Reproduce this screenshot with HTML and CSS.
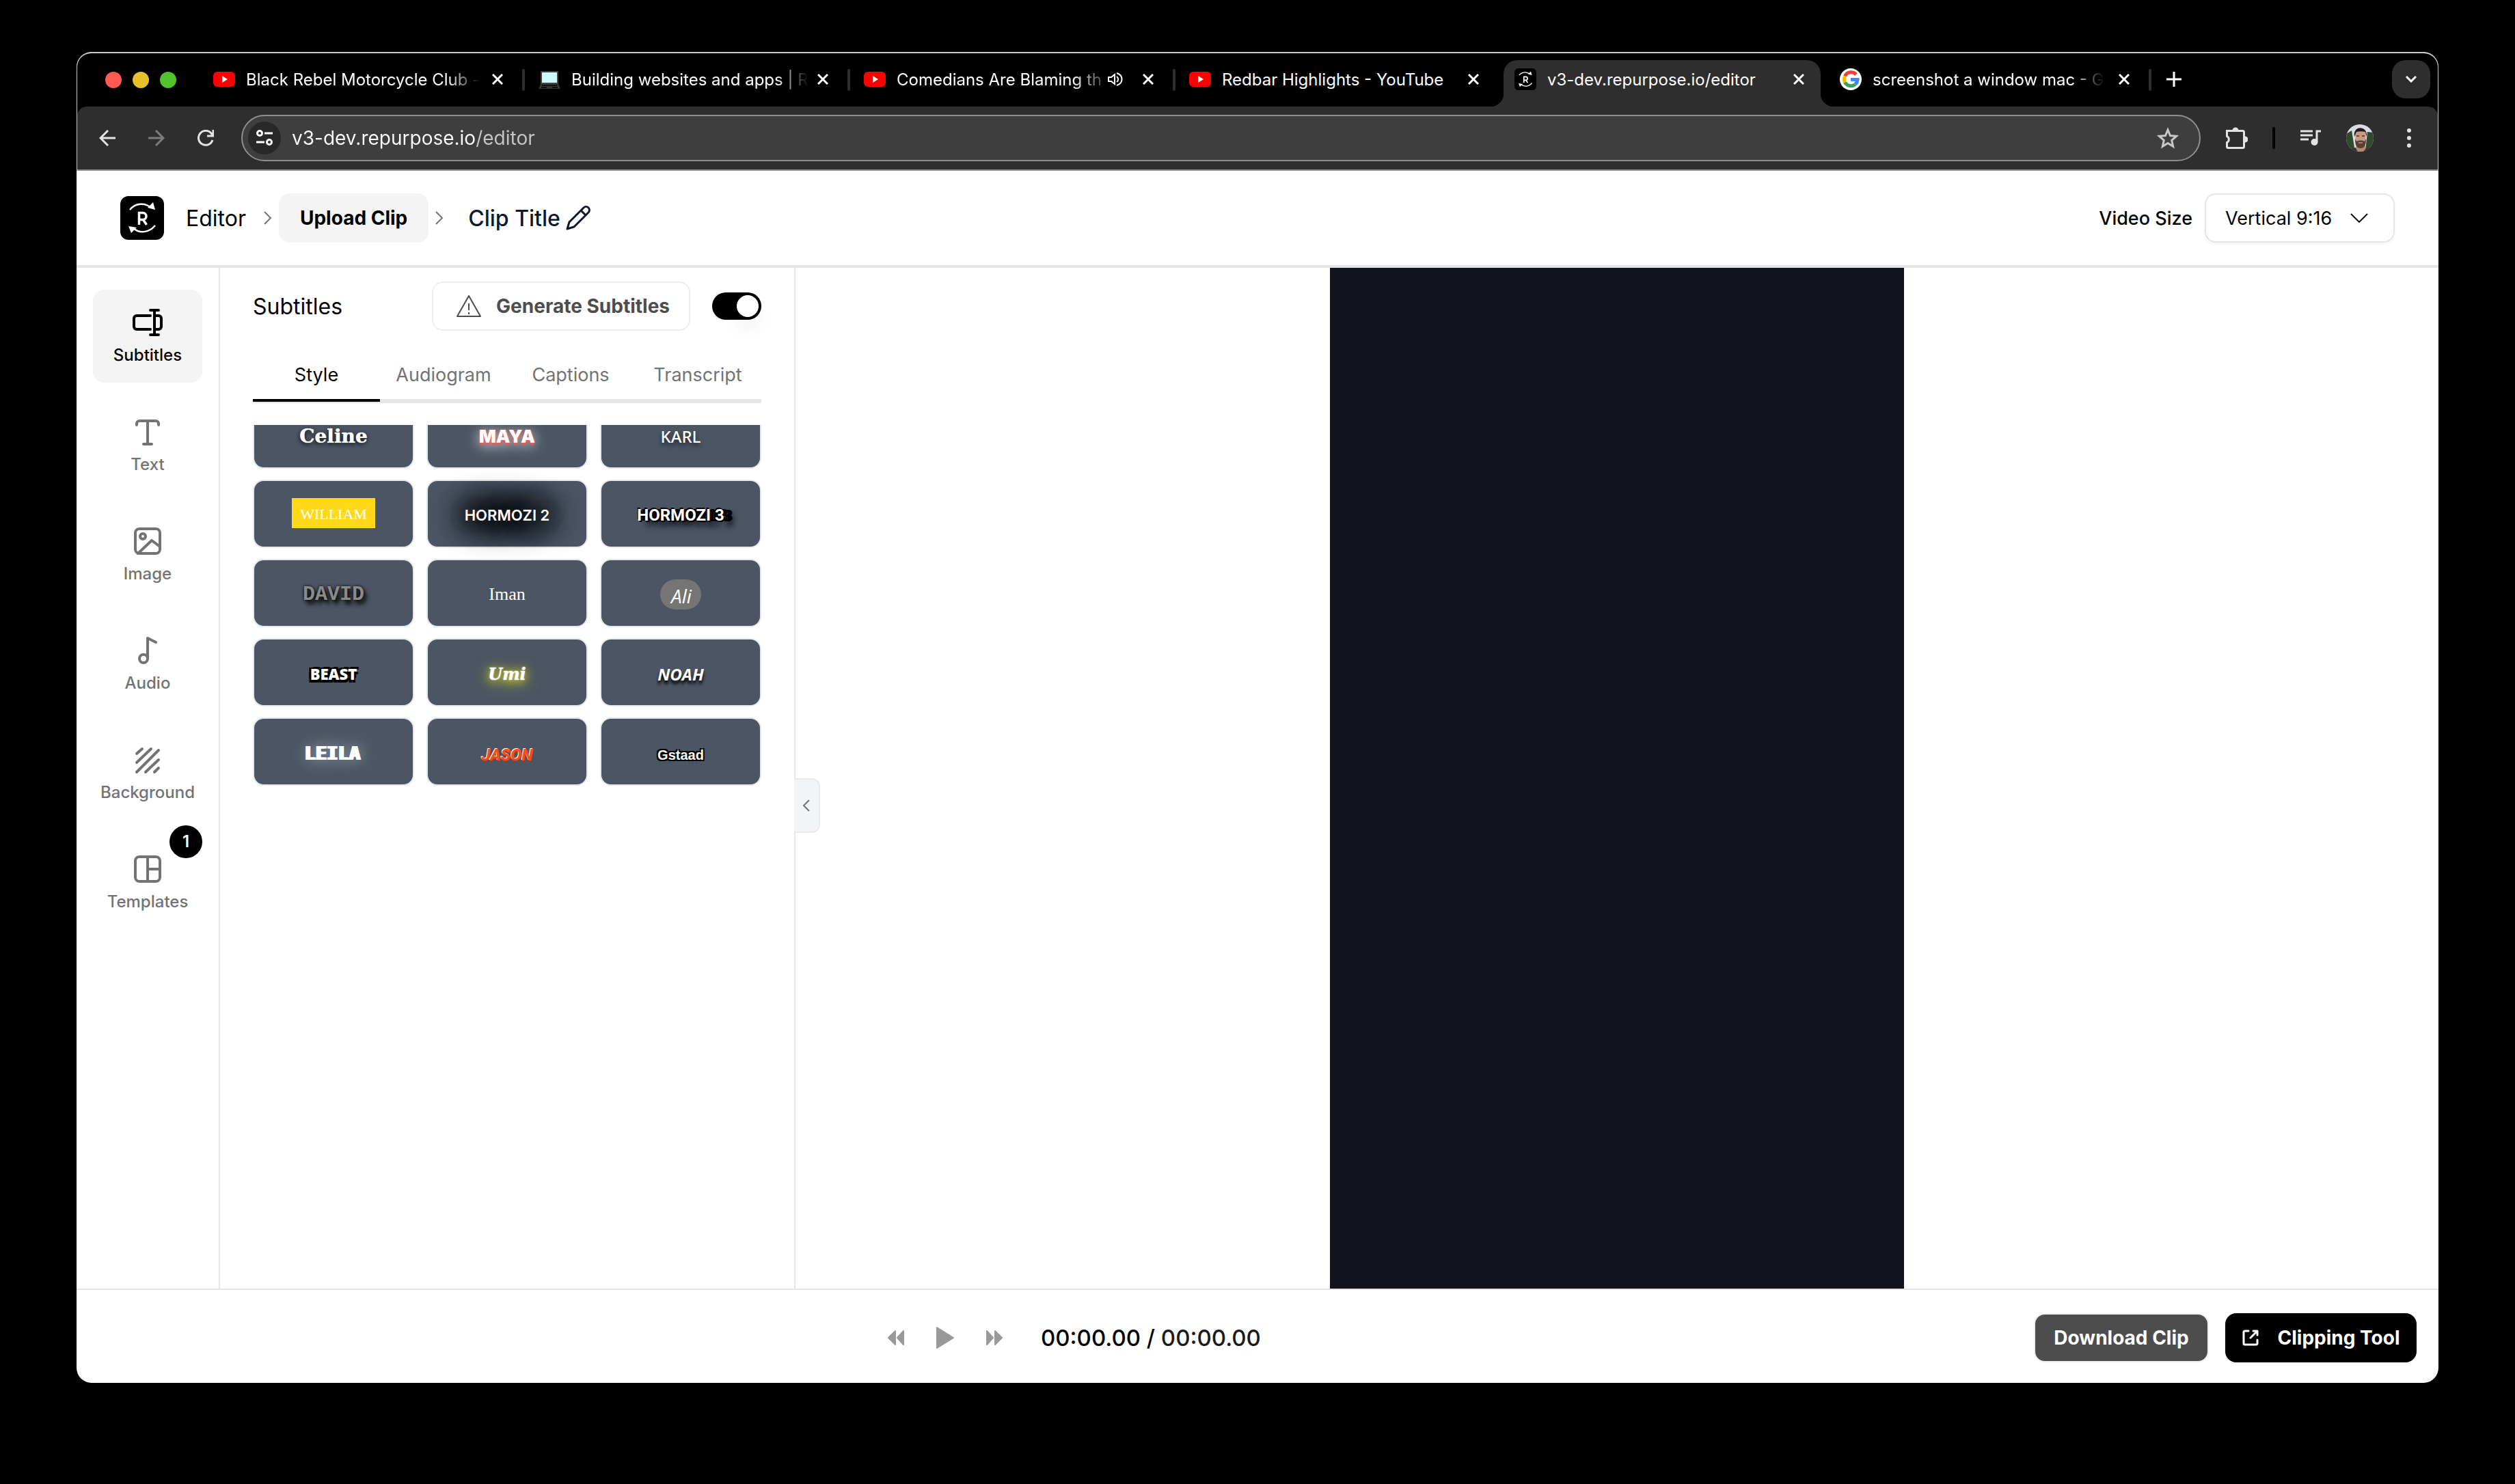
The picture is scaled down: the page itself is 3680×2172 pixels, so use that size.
FILE: index.html
```html
<!DOCTYPE html>
<html lang="en">
<head>
<meta charset="utf-8">
<title>Editor</title>
<link rel="stylesheet" href="styles.css">
</head>
<body>
<svg class="sprite" aria-hidden="true">
  <symbol id="yt" viewBox="0 0 32 22"><rect width="32" height="22" rx="6" fill="#f00"/><path d="M13 6v10l8-5z" fill="#fff"/></symbol>
  <symbol id="x" viewBox="0 0 16 16"><path d="M1 1l14 14M15 1L1 15" stroke="currentColor" stroke-width="3" fill="none"/></symbol>
  <symbol id="brand" viewBox="0 0 64 64"><rect width="64" height="64" rx="12"/><path d="M14 20C22 10 36 9 45 17M51 43C42 54 28 55 19 47" fill="none" stroke="#fff" stroke-width="2.500"/><path d="M51 20l-3-11-8 8zM12 44l4 10 8-8z" fill="#fff"/><path d="M27.500 42V24.500h5.500a5 5 0 0 1 0 10h-5.500m6 0l5 7.500" fill="none" stroke="#fff" stroke-width="3.500"/></symbol>
</svg>
<div class="window">
  <div class="chrome">
    <div class="tabstrip">
      <div class="lights"><i class="red"></i><i class="yellow"></i><i class="green"></i></div>
      <div class="tabs">
        <div class="tab"><svg class="fav"><use href="#yt"/></svg><button class="tab-title">Black Rebel Motorcycle Club -</button><button class="close" aria-label="Close tab"><svg><use href="#x"/></svg></button></div>
        <div class="tab"><svg class="fav" viewBox="0 0 32 32"><rect x="3" y="4" width="26" height="19" rx="1" fill="#444"/><rect x="5" y="6" width="22" height="15" fill="#cdf8ff"/><path d="M3 23h26l3 7H0z" fill="#333"/><path d="M5 25h22M4 28h8m8 0h8" stroke="#111" stroke-width="2"/></svg><button class="tab-title">Building websites and apps | R</button><button class="close" aria-label="Close tab"><svg><use href="#x"/></svg></button></div>
        <div class="tab audible"><svg class="fav"><use href="#yt"/></svg><button class="tab-title">Comedians Are Blaming th</button><button class="sound" aria-label="Mute tab"><svg viewBox="0 0 24 24" fill="none" stroke="currentColor" stroke-width="2"><path d="M2 9v6h4l5 4V5L6 9z"/><path d="M14 8c3 2 3 6 0 8M14 3c10 3 10 15 0 18"/></svg></button><button class="close" aria-label="Close tab"><svg><use href="#x"/></svg></button></div>
        <div class="tab whole"><svg class="fav"><use href="#yt"/></svg><button class="tab-title">Redbar Highlights - YouTube</button><button class="close" aria-label="Close tab"><svg><use href="#x"/></svg></button></div>
        <div class="tab whole active"><svg class="fav"><use href="#brand"/></svg><button class="tab-title">v3-dev.repurpose.io/editor</button><button class="close" aria-label="Close tab"><svg><use href="#x"/></svg></button></div>
        <div class="tab"><svg class="fav" viewBox="0 0 32 32"><circle cx="16" cy="16" r="16" fill="#fff"/><g fill="none" stroke-width="5"><path d="M24 9A10 10 0 0 0 7.500 11.500" stroke="#ea4335"/><path d="M7.500 11.500a10 10 0 0 0 0 9" stroke="#fbbc05"/><path d="M7.500 20.500A10 10 0 0 0 22.500 23.500" stroke="#34a853"/><path d="M22.500 23.500A10 10 0 0 0 26 16.500H16" stroke="#4285f4"/></g></svg><button class="tab-title">screenshot a window mac - G</button><button class="close" aria-label="Close tab"><svg><use href="#x"/></svg></button></div>
        <button class="new-tab" aria-label="New tab"><svg viewBox="0 0 22 22"><path d="M11 0v22M0 11h22" stroke="currentColor" stroke-width="3"/></svg></button>
      </div>
      <button class="tab-search" aria-label="Search tabs"><svg viewBox="0 0 16 10" fill="none" stroke="currentColor" stroke-width="3"><path d="M1 1l7 7 7-7"/></svg></button>
    </div>

    <div class="toolbar">
      <button class="nav" aria-label="Back"><svg viewBox="0 0 24 24"><path d="M24 12H2M13 1L2 12l11 11"/></svg></button>
      <button class="nav dim" aria-label="Forward"><svg viewBox="0 0 24 24"><path d="M0 12h22M11 1l11 11-11 11"/></svg></button>
      <button class="nav" aria-label="Reload"><svg viewBox="0 0 24 24"><path d="M22 15A10.500 10.500 0 1 1 20 5l3 4M23 0v9h-9"/></svg></button>
      <div class="omnibox">
        <button class="site" aria-label="Site information"><svg viewBox="0 0 24 24" fill="none" stroke="#fff" stroke-width="3"><circle cx="5" cy="5" r="3.500"/><path d="M12 5h12M0 18h12"/><circle cx="19" cy="18" r="3.500"/></svg></button>
        <input class="url" aria-label="Address" value="v3-dev.repurpose.io/editor">
        <button class="star" aria-label="Bookmark"><svg viewBox="0 0 32 32" fill="none" stroke="#c7c7c7" stroke-width="3"><path d="M16 4l3.500 8.500 9 .8-6.800 6 2 9L16 23.500 8.300 28.300l2-9-6.800-6 9-.8z"/></svg></button>
      </div>
      <div class="actions">
        <button aria-label="Extensions"><svg viewBox="0 0 32 32" fill="none" stroke="#e3e3e3" stroke-width="3"><path d="M1.500 5.500h23a2 2 0 0 1 2 2v21a2 2 0 0 1-2 2h-21a2 2 0 0 1-2-2v-6a5 5 0 0 0 0-9z"/><path d="M11 5a3 3 0 0 1 6 0M28 15a3 3 0 0 1 0 6" fill="#e3e3e3"/></svg></button>
        <span class="divider"></span>
        <button aria-label="Media controls"><svg viewBox="0 0 32 32" fill="none" stroke="#e3e3e3" stroke-width="3"><path d="M1 6h18M1 12h18M1 18h12M25 22V6h6"/><circle cx="21.500" cy="22" r="3.500" fill="#e3e3e3"/></svg></button>
        <button class="avatar" aria-label="Profile"><svg viewBox="0 0 40 40"><clipPath id="round"><circle cx="20" cy="20" r="20"/></clipPath><g clip-path="url(#round)"><rect width="40" height="40" fill="#dcdce6"/><path d="M0 14l8-5 5 31H0zM40 12l-9-1-3 29h12z" fill="#33482c"/><path d="M6 40c2-5 6-6 9-6h12c4 0 7 2 8 6z" fill="#353235"/><path d="M15 28h12l2 7-4 5h-8l-3-5z" fill="#b98871"/><path d="M13 13c0-7 16-7 16 0l-1 13c-2 8-12 8-14 0z" fill="#c79a84"/><path d="M13 21l2 4c3-2 9-2 12 0l2-4c0 7-1 14-8 14s-8-7-8-14z" fill="#5b4036"/><path d="M12 18C9 1 32 1 30 18l-2-7c-4-1-9-1-13 0z" fill="#221d1c"/><path d="M15 17h4M23 17h4" stroke="#45322c" stroke-width="1.500"/><path d="M18 27h6" stroke="#b5776c" stroke-width="2"/></g></svg></button>
        <button aria-label="Menu"><svg viewBox="0 0 32 32" fill="#e3e3e3"><circle cx="16" cy="5" r="3"/><circle cx="16" cy="16" r="3"/><circle cx="16" cy="27" r="3"/></svg></button>
      </div>
    </div>
  </div>

  <header class="header">
    <svg class="logo"><use href="#brand"/></svg>
    <a class="crumb" href="#">Editor</a>
    <svg class="sep" viewBox="0 0 12 20"><path d="M1 1l9 9-9 9"/></svg>
    <button class="upload">Upload Clip</button>
    <svg class="sep" viewBox="0 0 12 20"><path d="M1 1l9 9-9 9"/></svg>
    <button class="clip-title">Clip Title<svg viewBox="0 0 36 36" fill="none" stroke="currentColor" stroke-width="3" stroke-linejoin="round"><path d="M2 34l3-10L26 3a4.500 4.500 0 0 1 7 7L12 31zM22 7l7 7"/></svg></button>
    <label class="size-label" for="size">Video Size</label>
    <div class="select"><select id="size"><option>Vertical 9:16</option></select><svg viewBox="0 0 26 14"><path d="M1 1l12 12L25 1" fill="none" stroke="#111" stroke-width="2"/></svg></div>
  </header>

  <main class="main">
    <nav class="sidebar">
      <button class="item on"><svg viewBox="0 0 24 24"><path d="M14 17H4a2 2 0 0 1-2-2V9a2 2 0 0 1 2-2h10M17 7h3a2 2 0 0 1 2 2v6a2 2 0 0 1-2 2h-3M14 3h6M14 21h6M17 3v18"/></svg>Subtitles</button>
      <button class="item"><svg viewBox="0 0 24 24"><path d="M4 7V6a2 2 0 0 1 2-2h12a2 2 0 0 1 2 2v1M12 4v17M9 21h6"/></svg>Text</button>
      <button class="item"><svg viewBox="0 0 24 24"><rect x="3" y="3" width="18" height="18" rx="3"/><circle cx="8.500" cy="8.500" r="2"/><path d="M5 21L15 11.500 21 16"/></svg>Image</button>
      <button class="item"><svg viewBox="0 0 24 24"><circle cx="9" cy="18" r="3"/><path d="M12 18V3l6 3"/></svg>Audio</button>
      <button class="item"><svg viewBox="0 0 24 24"><path d="M4 7.500L8 4M4 14L14.500 4M4 21L20 5M10.500 21L20 12M17 21l3-3"/></svg>Background</button>
      <button class="item"><svg viewBox="0 0 24 24"><rect x="3" y="3" width="18" height="18" rx="3"/><path d="M12 3v18M12 12h9"/></svg>Templates<span class="badge">1</span></button>
    </nav>

    <section class="panel">
      <div class="panel-head">
        <h2>Subtitles</h2>
        <button class="generate"><svg viewBox="0 0 36 32" fill="none" stroke="currentColor" stroke-width="2" stroke-linejoin="round"><path d="M18 1L35 31H1zM18 12v10M18 25v3"/></svg>Generate Subtitles</button>
        <input class="toggle" type="checkbox" checked aria-label="Show subtitles">
      </div>
      <div class="subtabs">
        <button class="on">Style</button><button>Audiogram</button><button>Captions</button><button>Transcript</button>
      </div>
      <div class="scroll">
        <div class="cards">
          <button><span class="celine">Celine</span></button>
          <button><span class="maya">MAYA</span></button>
          <button><span class="karl">KARL</span></button>
          <button><span class="william">WILLIAM</span></button>
          <button><span class="hormozi2">HORMOZI 2</span></button>
          <button><span class="hormozi3">HORMOZI 3</span></button>
          <button><span class="david">DAVID</span></button>
          <button><span class="iman">Iman</span></button>
          <button><span class="ali">Ali</span></button>
          <button><span class="beast">BEAST</span></button>
          <button><span class="umi">Umi</span></button>
          <button><span class="noah">NOAH</span></button>
          <button><span class="leila">LEILA</span></button>
          <button class="low"><span class="jason">JASON</span></button>
          <button class="low"><span class="gstaad">Gstaad</span></button>
        </div>
      </div>
    </section>

    <section class="stage">
      <button class="collapse" aria-label="Collapse panel"><svg viewBox="0 0 10 18"><path d="M9 1L1 9l8 8" fill="none" stroke="#6b7280" stroke-width="2"/></svg></button>
      <div class="video"></div>
    </section>
  </main>

  <footer class="footer">
    <div class="player">
      <button class="skip" aria-label="Rewind"><svg viewBox="0 0 24 22"><path d="M11 1v20L1 11zM23 1v20l-9-10z"/></svg></button>
      <button class="play" aria-label="Play"><svg viewBox="0 0 28 34"><path d="M2 2v30l24-15z"/></svg></button>
      <button class="skip" aria-label="Fast forward"><svg viewBox="0 0 24 22"><path d="M1 1v20l9-10zM13 1v20l10-10z"/></svg></button>
      <div class="time">00:00.00 / <span>00:00.00</span></div>
    </div>
    <button class="download">Download Clip</button>
    <button class="clipping"><svg viewBox="0 0 24 24" fill="none" stroke="#fff" stroke-width="3" stroke-linecap="round" stroke-linejoin="round"><path d="M9 2H4a2 2 0 0 0-2 2v16a2 2 0 0 0 2 2h16a2 2 0 0 0 2-2v-5M16 2h6v6M22 2L12 12"/></svg>Clipping Tool</button>
  </footer>
</div>
</body>
</html>
```

FILE: styles.css
```css
* { box-sizing: border-box; }
body { margin: 0; height: 100vh; padding: 76px 112px 148px; background: #000; color: #000; font-family: Inter, "Liberation Sans", sans-serif; font-size: 28px; display: flex; }
button, input, select { font: inherit; color: inherit; background: none; border: 0; padding: 0; margin: 0; }
button { display: flex; align-items: center; justify-content: center; white-space: nowrap; }
a { color: inherit; text-decoration: none; }
svg { display: block; flex: none; }
.sprite { position: absolute; width: 0; height: 0; }

.window { flex: 1; min-width: 0; display: flex; flex-direction: column; background: #fff; border-radius: 22px; overflow: hidden; }
.chrome { background: #000; border: 2px solid #c9c7c7; border-width: 2px 1px 0; border-radius: 22px 22px 0 0; }

/* Browser tab strip */
.tabstrip { height: 78px; display: flex; align-items: flex-end; color: #fff; font-size: 24px; padding-right: 11px; }
.lights { display: flex; gap: 16px; padding: 0 38px 27px 41px; }
.lights i { width: 24px; height: 24px; border-radius: 50%; }
.red { background: #ff5b52; }
.yellow { background: #e6c02a; }
.green { background: #53c22b; }
.tabs { flex: 1; min-width: 0; display: flex; gap: 12px; }
.tab { position: relative; flex: 0 1 464px; min-width: 0; height: 68px; display: flex; align-items: center; padding: 0 24px 12px 16px; }
.tab::after { content: ""; position: absolute; right: -8px; top: 13px; width: 4px; height: 32px; border-radius: 2px; background: #2e2e2e; }
.tab:has(+ .active)::after, .tab.active::after { display: none; }
.active { background: #2e2e2e; border-radius: 20px 20px 0 0; }
.active::before { content: ""; position: absolute; left: -20px; right: -20px; bottom: 0; height: 20px; background: radial-gradient(circle at 0 0, transparent 20px, #2e2e2e 21px) left / 20px 20px no-repeat, radial-gradient(circle at 100% 0, transparent 20px, #2e2e2e 21px) right / 20px 20px no-repeat; }
.fav { width: 32px; height: 32px; margin-right: 16px; }
.tab-title { margin-right: auto; mask-image: linear-gradient(90deg, #000 calc(100% - 48px), transparent); }
.audible .tab-title { mask-image: linear-gradient(90deg, #000 calc(100% - 44px), #0004); }
.whole .tab-title { mask-image: none; }
.sound { margin-right: 28px; }
.sound svg { width: 24px; height: 24px; }
.close svg { width: 16px; height: 16px; }
.new-tab { padding: 0 18px 12px; }
.new-tab svg { width: 22px; height: 22px; }
.tab-search { width: 56px; height: 56px; border-radius: 20px; background: #2e2e2e; margin-bottom: 12px; }
.tab-search svg { width: 16px; height: 10px; }

/* Browser toolbar */
.toolbar { height: 94px; display: flex; align-items: center; background: #2e2e2e; border-bottom: 2px solid #8f8f8f; border-radius: 14px 14px 0 0; padding: 0 26px 0 32px; }
.nav { width: 24px; height: 24px; margin-right: 48px; color: #e3e3e3; }
.nav svg { width: 24px; height: 24px; fill: none; stroke: currentColor; stroke-width: 3; }
.nav.dim { color: #7c7c7c; }
.nav + .omnibox { margin-left: -8px; }
.omnibox { flex: 1; height: 68px; display: flex; align-items: center; background: #3e3e3e; border: 2px solid #8f8f8f; border-radius: 34px; padding: 0 30px 0 8px; }
.site { width: 48px; height: 48px; border-radius: 50%; background: #282828; margin-right: 16px; }
.site svg { width: 24px; height: 24px; }
.url { flex: 1; height: 40px; outline: 0; background: linear-gradient(90deg, #fff 268px, #c7c7c7 268px); background-clip: text; color: transparent; }
.star svg, .actions svg { width: 32px; height: 32px; }
.actions { display: flex; align-items: center; margin-left: 37px; gap: 36px; }
.divider { width: 4px; height: 32px; border-radius: 2px; background: #000; }
.actions .avatar svg { width: 40px; height: 40px; }

/* App header */
.header { height: 142px; display: flex; align-items: center; border-bottom: 4px solid #e5e5e5; padding: 0 64px; font-weight: 500; }
.logo { width: 64px; height: 64px; margin-right: 32px; }
.crumb { font-size: 32px; font-weight: 400; }
.sep { width: 12px; height: 20px; margin: 0 10px; fill: none; stroke: #737373; stroke-width: 2; }
.crumb + .sep { margin-left: 26px; }
.upload { height: 72px; padding: 0 31px; border-radius: 16px; background: #f4f4f5; font-weight: 700; }
.clip-title { font-size: 32px; font-weight: 500; color: #0f172a; gap: 8px; margin-left: 26px; margin-right: auto; }
.clip-title svg { width: 36px; height: 36px; }
.size-label { margin-right: 18px; font-size: 27px; }
.select { display: flex; align-items: center; position: relative; }
.select select { appearance: none; width: 278px; height: 72px; padding: 0 28px; border: 2px solid #e5e5e5; border-radius: 16px; box-shadow: 0 2px 4px #0000000d; font-size: 27px; font-weight: 400; }
.select svg { position: absolute; right: 39px; width: 26px; height: 14px; pointer-events: none; }

/* Editor body */
.main { flex: 1; min-height: 0; display: flex; }
.sidebar { width: 210px; border-right: 2px solid #e5e5e5; padding: 32px 24px; display: flex; flex-direction: column; gap: 24px; }
.item { position: relative; height: 136px; flex-direction: column; gap: 8px; border-radius: 16px; font-size: 24px; font-weight: 500; line-height: 32px; color: #737373; }
.item svg { width: 48px; height: 48px; fill: none; stroke: currentColor; stroke-width: 2; stroke-linecap: round; stroke-linejoin: round; }
.item.on { background: #f4f4f5; color: #000; }
.badge { position: absolute; top: -16px; right: 0; width: 48px; height: 48px; border-radius: 50%; background: #000; color: #fff; text-align: center; line-height: 48px; font-weight: 600; }

.panel { width: 842px; border-right: 2px solid #e5e7eb; padding: 20px 48px 0; display: flex; flex-direction: column; }
.panel-head { height: 72px; display: flex; align-items: center; }
.panel-head h2 { flex: 1; margin: 0; font-size: 32px; font-weight: 400; }
.generate { height: 72px; padding: 0 28px 0 34px; gap: 22px; border: 2px solid #ededf1; border-radius: 16px; color: #4d4d4d; font-weight: 700; }
.generate svg { width: 36px; height: 32px; }
.toggle { appearance: none; width: 72px; height: 40px; padding: 4px; margin-left: 32px; border-radius: 20px; background: #000; }
.toggle::after { content: ""; display: block; width: 32px; height: 32px; margin-left: auto; border-radius: 50%; background: #fff; box-shadow: 0 20px 24px #0000000d; }
.subtabs { display: flex; margin-top: 28px; border-bottom: 6px solid #e5e6e8; font-size: 27px; }
.subtabs button { flex: 1; height: 76px; margin-bottom: -4px; border-bottom: 4px solid transparent; color: #737373; }
.subtabs .on { border-color: #000; color: #000; }
.scroll { flex: 1; min-height: 0; overflow: hidden; margin-top: 32px; }
.cards { display: grid; grid-template-columns: repeat(3, 1fr); gap: 16px 18px; margin-top: -36px; }
.cards button { height: 100px; border: 2px solid #e5e7eb; border-radius: 16px; background: #4b5563; color: #fff; font-size: 24px; padding-top: 4px; }
.cards .low { padding-top: 10px; }
.celine { font-family: "DejaVu Serif", serif; font-weight: 700; font-size: 28px; text-shadow: 0 0 1px #fff, 0 2px 6px #000; }
.maya { font-weight: 900; font-size: 26px; text-shadow: 0 0 3px #f65, 0 3px 2px #e55, 0 4px 20px #fff; }
.karl { font-family: "Noto Sans", sans-serif; font-weight: 500; font-size: 24px; text-shadow: 0 4px 6px #0009; }
.william { font-family: "Liberation Serif", serif; font-size: 22px; background: #ffd91a; padding: 8px 12px 4px; line-height: 32px; margin-top: -6px; }
.hormozi2 { font-size: 22px; font-weight: 600; text-shadow: 0 0 28px #000, 0 0 32px #000, 0 0 36px #000, 0 0 40px #000, 0 0 44px #000, 0 0 52px #000, 0 0 60px #000; }
.hormozi3 { font-family: Roboto, sans-serif; font-weight: 700; text-shadow: -1px -2px #000, 2px 2px #000, 6px 0 #000, 10px 1px #000, 13px 1px #000, 14px 8px 8px #000; }
.david { font-family: "Liberation Mono", monospace; font-weight: 700; font-size: 30px; color: #8a8a8a; text-shadow: 4px 6px 6px #000, 0 0 4px #000; }
.iman { font-family: "Liberation Serif", serif; font-size: 26px; }
.ali { font-family: "Open Sans", sans-serif; font-style: italic; font-weight: 500; font-size: 28px; padding: 4px 14px 0 16px; line-height: 40px; border-radius: 22px; background: #757575; }
.beast { font-family: "Open Sans", sans-serif; font-weight: 800; font-size: 22px; text-shadow: -3px -2px #000, 3px -3px #000, -3px 4px #000, 2px 4px #000; }
.umi { font-family: "DejaVu Serif", serif; font-style: italic; font-weight: 700; text-shadow: 0 0 2px #fff, 0 2px 14px #ff0, 0 4px 24px #cc3; }
.noah { font-family: "Open Sans", sans-serif; font-style: italic; font-weight: 700; text-shadow: 0 5px 4px #000; }
.leila { font-family: "DejaVu Sans Mono", monospace; font-weight: 700; font-size: 27px; text-shadow: -3px 0 #fff, 0 0 20px #fff8, 0 0 40px #fff6; }
.jason { font-family: Roboto, sans-serif; font-style: italic; font-weight: 700; color: #ff4b12; text-shadow: -1px -1px #fff, 0 1px 2px #f20; }
.gstaad { font-family: "Liberation Sans", sans-serif; font-weight: 700; font-size: 20px; text-shadow: -2px -2px #000, 2px -2px #000, -2px 2px #000, 2px 2px #000; }

.stage { position: relative; flex: 1; min-width: 0; display: flex; justify-content: center; }
.collapse { position: absolute; left: -2px; top: 50%; width: 38px; height: 80px; border: 2px solid #e9eaed; border-left: 0; border-radius: 0 12px 12px 0; background: #f3f4f6; }
.collapse svg { width: 10px; height: 18px; }
.video { height: 100%; aspect-ratio: 9 / 16; background: #13121f; }

/* Playback bar */
.footer { height: 138px; display: flex; align-items: center; border-top: 2px solid #e5e5e5; padding: 4px 32px 0; font-weight: 700; }
.player { flex: 1; display: flex; align-items: center; padding-left: 1155px; }
.player svg { fill: #999; stroke: #999; stroke-width: 2; stroke-linejoin: round; }
.skip svg { width: 24px; height: 22px; }
.play { margin: 0 46px; }
.play svg { width: 28px; height: 34px; }
.time { margin-left: 56px; font-size: 33px; font-weight: 500; }
.time span { color: #1a1a1a; }
.download { width: 256px; height: 72px; border: 2px solid #efeff3; border-radius: 16px; background: #4d4d4d; color: #fff; }
.clipping { width: 280px; height: 72px; margin-left: 24px; gap: 28px; border-radius: 16px; background: #000; color: #fff; }
.clipping svg { width: 24px; height: 24px; }
```
